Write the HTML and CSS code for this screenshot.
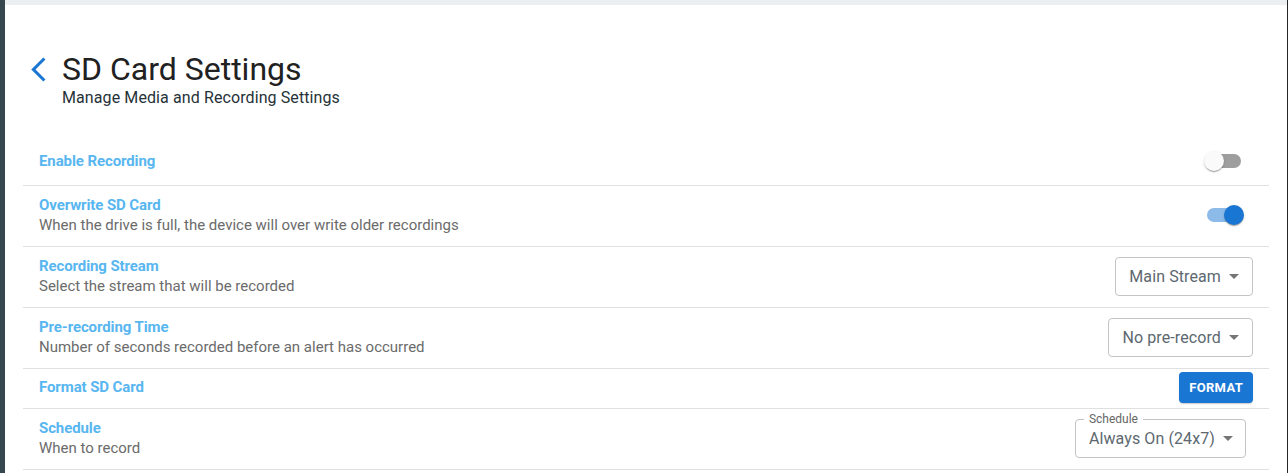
FILE: index.html
```html
<!DOCTYPE html>
<html lang="en">
<head>
<meta charset="utf-8">
<title>SD Card Settings</title>
<link rel="stylesheet" href="styles.css">
</head>
<body>
<div class="app">
  <aside class="rail"></aside>
  <main class="main">
    <div class="topbar"></div>
    <div class="content">
      <header class="page-head">
        <button class="back" aria-label="Back">
          <svg viewBox="0 0 24 24" width="29" height="29"><path d="M17.77 3.77 16 2 6 12l10 10 1.77-1.77L9.54 12z" fill="#1976d2"/></svg>
        </button>
        <div class="titles">
          <h1 class="page-title">SD Card Settings</h1>
          <p class="page-sub">Manage Media and Recording Settings</p>
        </div>
      </header>

      <ul class="settings">
        <li class="row row--first">
          <div class="text"><div class="label">Enable Recording</div></div>
          <div class="control">
            <span class="switch"><span class="track"></span><span class="thumb"></span></span>
          </div>
        </li>
        <li class="row">
          <div class="text">
            <div class="label">Overwrite SD Card</div>
            <div class="desc">When the drive is full, the device will over write older recordings</div>
          </div>
          <div class="control">
            <span class="switch switch--on"><span class="track"></span><span class="thumb"></span></span>
          </div>
        </li>
        <li class="row">
          <div class="text">
            <div class="label">Recording Stream</div>
            <div class="desc">Select the stream that will be recorded</div>
          </div>
          <div class="control">
            <div class="select"><span class="value">Main Stream</span><svg viewBox="0 0 24 24" width="24" height="24"><path d="M7 10l5 5 5-5z" fill="#757575"/></svg></div>
          </div>
        </li>
        <li class="row">
          <div class="text">
            <div class="label">Pre-recording Time</div>
            <div class="desc">Number of seconds recorded before an alert has occurred</div>
          </div>
          <div class="control">
            <div class="select"><span class="value">No pre-record</span><svg viewBox="0 0 24 24" width="24" height="24"><path d="M7 10l5 5 5-5z" fill="#757575"/></svg></div>
          </div>
        </li>
        <li class="row row--compact">
          <div class="text"><div class="label">Format SD Card</div></div>
          <div class="control">
            <button class="btn">FORMAT</button>
          </div>
        </li>
        <li class="row">
          <div class="text">
            <div class="label">Schedule</div>
            <div class="desc">When to record</div>
          </div>
          <div class="control">
            <div class="select select--outlined"><span class="float-label">Schedule</span><span class="value">Always On (24x7)</span><svg viewBox="0 0 24 24" width="24" height="24"><path d="M7 10l5 5 5-5z" fill="#757575"/></svg></div>
          </div>
        </li>
      </ul>
    </div>
  </main>
  <div class="edge"></div>
</div>
</body>
</html>
```

FILE: styles.css
```css
* { box-sizing: border-box; }

html, body {
  margin: 0;
  padding: 0;
  height: 100%;
  background: #ffffff;
  font-family: Roboto, "Liberation Sans", Arial, sans-serif;
}

.app {
  display: flex;
  min-height: 100vh;
}

.rail {
  width: 5px;
  flex: none;
  background: #37474f;
}

.edge {
  width: 1px;
  flex: none;
  background: #262626;
}

.main {
  flex: 1;
  display: flex;
  flex-direction: column;
  background: #fff;
}

.topbar {
  height: 5px;
  background: #eceff1;
}

.content {
  padding: 45px 18px 0 18px;
}

.page-head {
  display: flex;
  align-items: flex-start;
  padding-left: 1px;
  margin-bottom: 33px;
}

.back {
  border: 0;
  background: none;
  padding: 0;
  margin: 5px 9px 0 0;
  width: 29px;
  height: 29px;
  display: flex;
  cursor: pointer;
}

.page-title {
  margin: 0;
  font-size: 32px;
  line-height: 38px;
  font-weight: 400;
  color: #212121;
}

.page-sub {
  margin: 0;
  font-size: 16px;
  line-height: 20px;
  letter-spacing: 0.1px;
  color: #263238;
}

.settings {
  list-style: none;
  margin: 0;
  padding: 0;
}

.row {
  display: flex;
  align-items: center;
  justify-content: space-between;
  padding: 9px 16px 11px 16px;
  border-bottom: 1px solid #e0e0e0;
}

.row--first {
  padding-top: 10px;
  padding-bottom: 14px;
}

.row--compact {
  padding-top: 8px;
  padding-bottom: 11px;
}

.text {
  display: flex;
  flex-direction: column;
}

.label {
  font-size: 15px;
  line-height: 20px;
  font-weight: 700;
  letter-spacing: -0.1px;
  color: #58b6f0;
}

.desc {
  font-size: 15px;
  line-height: 20px;
  color: #6b6b6b;
}

.control {
  height: 20px;
  display: flex;
  align-items: center;
}

/* switch */
.switch {
  position: relative;
  width: 58px;
  height: 38px;
  display: flex;
  align-items: center;
  justify-content: center;
}

.track {
  width: 34px;
  height: 14px;
  border-radius: 7px;
  background: #9e9e9e;
}

.thumb {
  position: absolute;
  top: 9px;
  left: 9px;
  width: 20px;
  height: 20px;
  border-radius: 50%;
  background: #fafafa;
  box-shadow: 0 2px 1px -1px rgba(0,0,0,.2), 0 1px 1px 0 rgba(0,0,0,.14), 0 1px 3px 0 rgba(0,0,0,.12);
}

.switch--on .track {
  background: #8cbbe9;
}

.switch--on .thumb {
  left: 29px;
  background: #1976d2;
}

/* select */
.select {
  position: relative;
  display: flex;
  align-items: center;
  height: 39px;
  border: 1px solid #c4c4c4;
  border-radius: 4px;
  padding: 0 6px 0 13px;
  font-size: 16px;
  letter-spacing: 0.1px;
  color: #5d6870;
}

.select .value {
  white-space: nowrap;
}

.select svg {
  margin-left: 1px;
  flex: none;
}

.select--outlined {
  margin-right: 7px;
  padding-left: 13px;
  padding-right: 5px;
}

.float-label {
  position: absolute;
  left: 8px;
  top: -8px;
  padding: 0 5px;
  background: #fff;
  font-size: 12px;
  line-height: 14px;
  letter-spacing: 0;
  color: #666;
}

/* button */
.btn {
  height: 31px;
  padding: 0 10px;
  border: 0;
  border-radius: 4px;
  background: #1976d2;
  color: #fff;
  font-family: Roboto, "Liberation Sans", Arial, sans-serif;
  font-size: 13px;
  font-weight: 700;
  letter-spacing: 0.3px;
  box-shadow: 0 2px 1px -1px rgba(0,0,0,.12), 0 1px 2px 0 rgba(0,0,0,.1);
  cursor: pointer;
}
```
